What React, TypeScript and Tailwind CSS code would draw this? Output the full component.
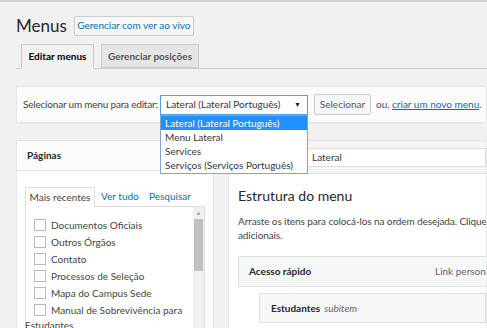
import React from 'react';

const paginas = [
  'Documentos Oficiais',
  'Outros Órgãos',
  'Contato',
  'Processos de Seleção',
  'Mapa do Campus Sede',
  'Manual de Sobrevivência para',
];

const opcoes = ['Lateral (Lateral Português)', 'Menu Lateral', 'Services', 'Serviços (Serviços Português)'];

export default function App() {
  return (
    <div className="w-[487px] h-[328px] overflow-hidden bg-[#f1f1f1] border-t-2 border-[#d4d4d4] text-[10px] text-[#444] font-['Lato',sans-serif] whitespace-nowrap relative">
      <div className="pl-4">
        {/* Header */}
        <div className="flex items-center gap-[7px] h-[21px] mt-[13px]">
          <h1 className="text-[17px] font-normal text-[#23282d] leading-none">Menus</h1>
          <button className="h-[20px] w-[120px] border border-[#ccc] bg-[#f7f7f7] text-[#0073aa] text-[10px] rounded-[2px]">
            Gerenciar com ver ao vivo
          </button>
        </div>

        {/* Tabs */}
        <div className="flex items-end gap-[7px] pl-[5px] mt-[8px] h-[25px] border-b border-[#ccc]">
          <div className="h-[25px] w-[73px] -mb-px border border-[#ccc] border-b-[#f1f1f1] bg-[#f1f1f1] font-bold text-[#000] flex items-center justify-center">
            Editar menus
          </div>
          <div className="h-[24px] w-[98px] border border-[#ccc] bg-[#e5e5e5] font-bold text-[#555] flex items-center justify-center">
            Gerenciar posições
          </div>
        </div>

        {/* Select menu */}
        <div className="mt-[17px] h-[37px] bg-[#fbfbfb] border border-[#e5e5e5] flex items-center pl-[6px] gap-[5px]">
          <span className="w-[132px] tracking-[-0.2px]">Selecionar um menu para editar:</span>
          <div className="relative">
            <div className="w-[148px] h-[20px] border border-[#5b9dd9] bg-white flex items-center justify-between pl-[5px] pr-[6px] text-[#32373c]">
              <span>Lateral (Lateral Português)</span>
              <span className="text-[7px] text-[#222]">▼</span>
            </div>
            <div className="absolute left-0 top-[20px] w-[148px] bg-white border border-[#7ea6d3] z-10 text-[#32373c] leading-[14px] pb-[1px]">
              {opcoes.map((o, i) => (
                <div key={o} className={i === 0 ? 'bg-[#1e90ff] text-white pl-[4px]' : 'pl-[4px]'}>{o}</div>
              ))}
            </div>
          </div>
          <button className="h-[21px] w-[57px] ml-[1px] border border-[#ccc] bg-[#f7f7f7] text-[#555] rounded-[2px]">Selecionar</button>
          <span className="text-[#555]">
            ou, <a className="text-[#0073aa] underline">criar um novo menu</a>.
          </span>
        </div>

        {/* Columns */}
        <div className="flex mt-[17px] gap-[14px]">
          {/* Left column */}
          <div className="w-[198px] shrink-0 bg-white border border-[#e5e5e5] h-[200px]">
            <div className="h-[30px] border-b border-[#e5e5e5] bg-[#fbfbfb] flex items-center pl-[10px] font-bold text-[#23282d]">
              Páginas
            </div>
            <div className="pt-[16px] pl-[8px] pr-[8px]">
              <div className="flex items-end h-[19px]">
                <div className="h-[20px] w-[70px] -mb-px border border-[#ddd] border-b-white bg-white flex items-center justify-center text-[#444]">Mais recentes</div>
                <div className="w-[54px] pl-[6px] text-[#0073aa] h-[19px] flex items-center">Ver tudo</div>
                <div className="text-[#0073aa] h-[19px] flex items-center">Pesquisar</div>
              </div>
              <div className="border border-[#ddd] h-[140px] flex">
                <div className="flex-1 pl-[8px] pt-[10px]">
                  {paginas.map((p) => (
                    <div key={p} className="flex items-start gap-[5px] leading-[17px] text-[#444]">
                      <span className="w-[12px] h-[12px] border border-[#b4b9be] bg-white shrink-0 mt-[2px]" />
                      <span>{p}</span>
                    </div>
                  ))}
                  <div className="leading-[17px] -ml-[9px] -mt-[2px]">Estudantes</div>
                </div>
                <div className="w-[11px] bg-[#f1f1f1] flex flex-col items-center">
                  <span className="text-[6px] text-[#a3a3a3] leading-[10px] mt-[1px]">▲</span>
                  <div className="w-[9px] h-[52px] bg-[#c1c1c1] mt-[1px]" />
                </div>
              </div>
            </div>
          </div>

          {/* Right column */}
          <div className="flex-1 min-w-0 bg-white border border-[#e5e5e5] h-[200px] overflow-hidden">
            <div className="h-[33px] bg-[#f5f5f5] border-b border-[#dfdfdf] flex items-center pl-[77px]">
              <div className="h-[19px] flex-1 bg-white border border-[#ddd] flex items-center pl-[5px] text-[#32373c]">Lateral</div>
            </div>
            <div className="pl-[9px]">
              <h3 className="text-[14px] text-[#23282d] mt-[12px] leading-[20px]">Estrutura do menu</h3>
              <p className="mt-[8px] leading-[14px] text-[#444] tracking-[-0.1px]">
                Arraste os itens para colocá-los na ordem desejada. Clique na seta à direita do item para mostrar as opções
                <br />
                adicionais.
              </p>
              <div className="mt-[14px] h-[31px] bg-[#f6f7f7] border border-[#dfdfdf] flex items-center pl-[10px] -mr-[80px]">
                <span className="w-[186px] font-bold text-[#23282d]">Acesso rápido</span>
                <span className="text-[#666]">Link personalizado</span>
              </div>
              <div className="mt-[6px] ml-[21px] h-[30px] bg-[#f6f7f7] border border-[#dfdfdf] flex items-center pl-[11px]">
                <span className="font-bold text-[#23282d]">Estudantes</span>
                <span className="ml-[4px] italic text-[#666]">subitem</span>
              </div>
              <div className="mt-[6px] ml-[21px] h-[30px] bg-[#f6f7f7] border border-[#dfdfdf]" />
            </div>
          </div>
        </div>
      </div>
    </div>
  );
}
